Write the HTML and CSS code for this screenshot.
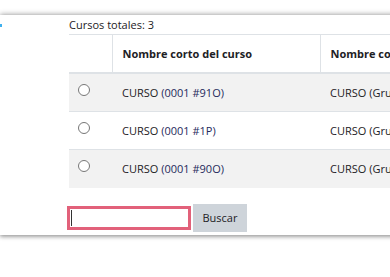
FILE: index.html
```html
<!DOCTYPE html>
<html lang="es">
<head>
    <meta charset="UTF-8">
    <meta name="viewport" content="width=device-width, initial-scale=1.0">
    <title>Cursos</title>
    <link rel="stylesheet" href="styles.css">
</head>
<body>
    <div class="page">
        <div class="card">
            <div class="side">
                <span class="side-mark"></span>
            </div>
            <div class="main">
                <div class="total">Cursos totales: 3</div>

                <!-- Course list -->
                <table class="courses">
                    <thead>
                        <tr>
                            <th class="col-select"></th>
                            <th class="col-short">Nombre corto del curso</th>
                            <th class="col-full">Nombre completo del curso</th>
                        </tr>
                    </thead>
                    <tbody>
                        <tr>
                            <td class="col-select"><input type="radio" name="course"></td>
                            <td>CURSO <span class="code">(0001 #91O)</span></td>
                            <td>CURSO (Grupo 91O)</td>
                        </tr>
                        <tr>
                            <td class="col-select"><input type="radio" name="course"></td>
                            <td>CURSO <span class="code">(0001 #1P)</span></td>
                            <td>CURSO (Grupo 1P)</td>
                        </tr>
                        <tr>
                            <td class="col-select"><input type="radio" name="course"></td>
                            <td>CURSO <span class="code">(0001 #90O)</span></td>
                            <td>CURSO (Grupo 90O)</td>
                        </tr>
                    </tbody>
                </table>

                <!-- Search -->
                <form class="search" onsubmit="return false">
                    <span class="search-field">
                        <input type="text" class="search-input">
                        <span class="caret"></span>
                    </span>
                    <button type="submit" class="search-btn">Buscar</button>
                </form>
            </div>
        </div>
    </div>
</body>
</html>
```

FILE: styles.css
```css
body {
    margin: 0;
    font-family: "Open Sans", "Noto Sans", sans-serif;
    font-size: 11px;
    color: #1d2125;
    background: #fff;
}
.page {
    height: 277px;
    padding-top: 15px;
    box-sizing: border-box;
    overflow: hidden;
}
.card {
    display: flex;
    margin-right: -20px;
    height: 220px;
    background: #fff;
    box-shadow: 0 2px 4px rgba(0, 0, 0, 0.3), 0 -1px 5px rgba(0, 0, 0, 0.3);
}
.side {
    width: 69px;
    flex-shrink: 0;
}
.side-mark {
    display: block;
    width: 2px;
    height: 3px;
    margin-top: 9px;
    background: #3fb0ee;
}
.main {
    flex: 1;
    min-width: 0;
}
.total {
    height: 18px;
    line-height: 18px;
    margin-top: 1px;
}
.courses {
    border-collapse: collapse;
    width: 420px;
    table-layout: fixed;
}
.courses th,
.courses td {
    box-sizing: border-box;
    padding: 0 10px;
    white-space: nowrap;
    overflow: hidden;
}
.courses th {
    text-align: left;
    font-weight: bold;
    height: 38px;
    border-top: 1px solid #dee2e6;
    border-bottom: 2px solid #dee2e6;
    border-left: 1px solid #dee2e6;
}
.courses th:first-child {
    border-left: none;
}
.courses td {
    height: 38px;
    border-top: 1px solid #dee2e6;
}
.courses tbody tr:first-child td {
    height: 39px;
}
.courses tbody tr:nth-child(odd) {
    background: #f2f2f2;
}
.col-select {
    width: 43px;
}
.courses td.col-select {
    padding: 0 0 0 9px;
    vertical-align: top;
}
.col-short {
    width: 208px;
}
.courses input[type="radio"] {
    margin: 10px 0 0 0;
    width: 12px;
    height: 12px;
}
.code {
    color: #1f2a5c;
}
.search {
    display: flex;
    align-items: center;
    margin: 16px 0 0 -2px;
}
.search-field {
    position: relative;
    display: flex;
    margin-right: 2px;
}
.search-input {
    box-sizing: border-box;
    width: 124px;
    height: 24px;
    margin: 1px 0 0 0;
    padding: 0 3px;
    border: 3px solid #e2617a;
    outline: none;
    font: inherit;
}
/* text cursor of the focused field */
.caret {
    position: absolute;
    left: 4px;
    top: 5px;
    width: 1px;
    height: 16px;
    background: #333;
}
.search-btn {
    width: 54px;
    height: 28px;
    padding: 0;
    border: none;
    border-radius: 0;
    background: #ced4da;
    color: #1d2125;
    font: inherit;
    cursor: pointer;
}
```
